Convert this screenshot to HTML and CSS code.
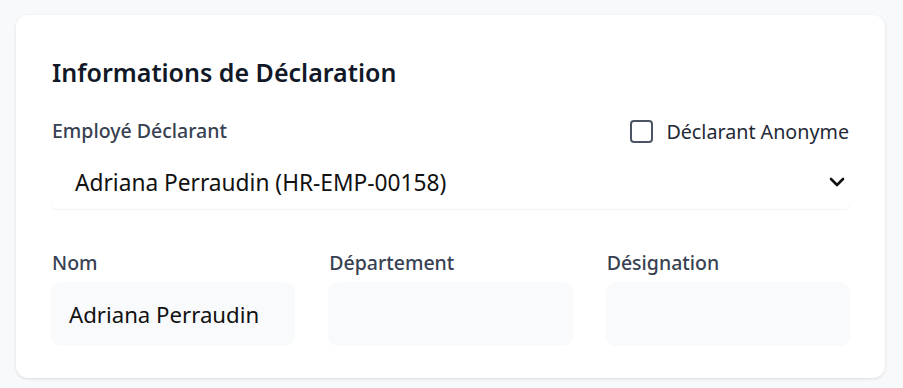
FILE: index.html
```html
<!DOCTYPE html>
<html lang="fr">
<head>
  <meta charset="UTF-8" />
  <meta name="viewport" content="width=device-width, initial-scale=1.0" />
  <title>Informations de Déclaration</title>
  <link rel="stylesheet" href="styles.css">
</head>
<body>
<div class="card">
  <h2 class="title">Informations de Déclaration</h2>

  <div class="field-head">
    <label class="label">Employé Déclarant</label>
    <label class="check"><input type="checkbox"><span>Déclarant Anonyme</span></label>
  </div>
  <div class="select">
    <span>Adriana Perraudin (HR-EMP-00158)</span>
    <svg width="16" height="10" viewBox="0 0 16 10"><polyline points="2,2 8,8 14,2" fill="none" stroke="#111" stroke-width="2.6" stroke-linecap="round" stroke-linejoin="round"/></svg>
  </div>

  <div class="grid">
    <div class="field">
      <label class="label">Nom</label>
      <div class="input">Adriana Perraudin</div>
    </div>
    <div class="field">
      <label class="label">Département</label>
      <div class="input"></div>
    </div>
    <div class="field">
      <label class="label">Désignation</label>
      <div class="input"></div>
    </div>
  </div>
</div>
</body>
</html>
```

FILE: styles.css
```css
body { margin: 0; font-family: 'Noto Sans', sans-serif; background: #f8f9fb; padding: 15px 18px 10px 16px; }
.card { background: #fff; border-radius: 12px; box-shadow: 0 1px 3px rgba(0,0,0,0.12); padding: 40px 35px 32px 36px; }
.title { margin: 0 0 28px; font-size: 25px; font-weight: 600; color: #111827; line-height: 34px; }
.field-head { display: flex; justify-content: space-between; align-items: center; margin-bottom: 10px; }
.label { display: block; font-size: 19.5px; font-weight: 500; color: #374151; line-height: 28px; }
.check { display: flex; align-items: center; gap: 13px; font-size: 19.7px; color: #1f2937; margin-right: 1px; }
.check input { appearance: none; margin: 0; width: 23px; height: 23px; border: 2px solid #4b5563; border-radius: 4px; box-sizing: border-box; }
.select { display: flex; justify-content: space-between; align-items: center; height: 54px; box-sizing: border-box; padding: 0 5px 0 24px; margin: 2px 0 40px -1px; border-radius: 6px; box-shadow: 0 1px 1px rgba(0,0,0,0.05); font-size: 22.7px; color: #111; }
.grid { display: grid; grid-template-columns: repeat(3, 1fr); gap: 34px; }
.field .label { margin-bottom: 5px; }
.input { height: 64px; box-sizing: border-box; margin-left: -1px; padding: 0 18px; display: flex; align-items: center; background: #f9fafb; border-radius: 10px; font-size: 22.2px; color: #111; }
```
